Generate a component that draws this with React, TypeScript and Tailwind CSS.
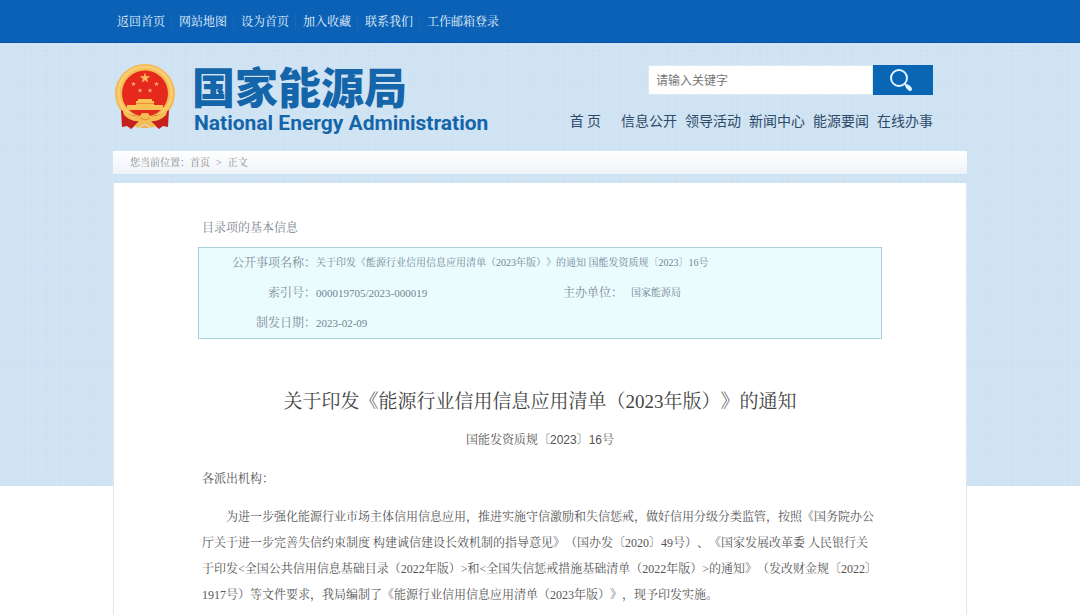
const utilityLinks = ['返回首页', '网站地图', '设为首页', '加入收藏', '联系我们', '工作邮箱登录'];

const mainLinks = ['信息公开', '领导活动', '新闻中心', '能源要闻', '在线办事'];

function Star({ x, y, r }: { x: number; y: number; r: number }) {
  const points = Array.from({ length: 10 }, (_, i) => {
    const radius = i % 2 === 0 ? r : r * 0.4;
    const angle = (Math.PI / 5) * i - Math.PI / 2;
    return `${(x + radius * Math.cos(angle)).toFixed(2)},${(y + radius * Math.sin(angle)).toFixed(2)}`;
  }).join(' ');
  return <polygon points={points} />;
}

function Emblem() {
  return (
    <svg viewBox="0 0 60 66" className="h-[66px] w-[60px] shrink-0" role="img" aria-label="国徽">
      <ellipse cx="30" cy="29.5" rx="30" ry="29.5" fill="#f5b952" />
      <ellipse cx="30" cy="29" rx="26.5" ry="26" fill="none" stroke="#f9cd72" strokeWidth="3" />
      <path d="M6 46 Q30 60 54 46 L53 63 L48 62 L44 65 L38 60 H22 L16 65 L12 62 L7 63 Z" fill="#c5201b" />
      <circle cx="30" cy="29.5" r="23" fill="#e52a1d" />
      <g fill="#f7b072">
        <Star x={18.5} y={20} r={2.6} />
        <Star x={41.5} y={20} r={2.6} />
        <Star x={25} y={26.5} r={2.6} />
        <Star x={35} y={26.5} r={2.6} />
      </g>
      <g fill="#f9bd5c">
        <Star x={30} y={14} r={5.5} />
      </g>
      <path d="M23 35 H37 V37 H39 V41 H48 V46 H12 V41 H21 V37 H23 Z" fill="#f9c256" />
      <path d="M21 39.500 H39" stroke="#ee8a3a" strokeWidth="1" />
      <path d="M7 44 Q17 54 25 52 L27 49 H33 L35 52 Q43 54 53 44 L51 51 Q44 58 36 57 L41 62 L37 64 L30 60 L23 64 L19 62 L24 57 Q16 58 9 51 Z" fill="#f7bd55" />
      <path d="M25 54 L30 56 L35 54" fill="none" stroke="#e08a32" strokeWidth="1" />
      <path d="M25 64 L30 61 L35 64 Z" fill="#f2b04a" />
    </svg>
  );
}

function SearchIcon() {
  return (
    <svg viewBox="0 0 24 24" className="mr-1 size-6" fill="none" stroke="#dff5ff" strokeLinecap="round" aria-hidden="true">
      <circle cx="10" cy="10" r="8" strokeWidth="2" />
      <path d="M16 16 L18 18" strokeWidth="2" />
      <path d="M18.500 18.500 L21 21" strokeWidth="4" />
    </svg>
  );
}

function Backdrop() {
  return (
    <div className="absolute inset-x-0 top-0 -z-10 h-[486px] bg-[#cfe3f3]" aria-hidden="true">
      <div className="h-full bg-[repeating-linear-gradient(90deg,#ffffff12_0_1px,transparent_1px_7px),repeating-linear-gradient(0deg,#ffffff12_0_1px,transparent_1px_9px),repeating-linear-gradient(90deg,#b4d3ea12_0_2px,transparent_2px_23px),repeating-linear-gradient(0deg,#b4d3ea12_0_2px,transparent_2px_31px)]" />
    </div>
  );
}

function Header() {
  return (
    <header>
      <nav className="bg-[#0b61b5] shadow-[inset_0_-1px_0_#0a559f]" aria-label="快捷链接">
        <ul className="mx-auto flex h-[43px] w-full max-w-[854px] items-center gap-[7px] pl-1 text-xs text-[#e6f3ff]">
          {utilityLinks.map((label) => (
            <li key={label} className="border-r border-white/5 pr-[6px] leading-4 last:border-0">
              <a href="#">{label}</a>
            </li>
          ))}
        </ul>
      </nav>
      <div className="mx-auto flex h-[108px] w-full max-w-[854px] items-start justify-between pr-[34px] pl-[2px]">
        <a href="#" className="flex pt-[21px] text-[#1465aa]">
          <Emblem />
          <span className="ml-[17px] flex flex-col pt-[3px] font-['Roboto','Noto_Sans_CJK_SC',sans-serif] font-bold">
            <span className="text-[43px] leading-[44px] font-black">国家能源局</span>
            <span className="pl-[2px] text-[21px] leading-6">National Energy Administration</span>
          </span>
        </a>
        <div className="flex flex-col items-end pt-[22px] font-['Noto_Sans_CJK_SC',sans-serif]">
          <form className="flex h-[30px]" role="search" onSubmit={(event) => event.preventDefault()}>
            <input
              type="search"
              aria-label="搜索关键字"
              placeholder="请输入关键字"
              className="w-[225px] border border-[#dde8f0] bg-white px-[7px] text-xs text-gray-700 outline-none placeholder:text-[#777]"
            />
            <button type="submit" aria-label="搜索" className="flex w-[60px] items-center justify-center bg-[#0966b4]">
              <SearchIcon />
            </button>
          </form>
          <nav className="mt-[15px] flex gap-2 text-sm leading-5 text-[#2f4a68]" aria-label="主导航">
            <a href="#" className="mr-3">
              首 页
            </a>
            {mainLinks.map((label) => (
              <a key={label} href="#">
                {label}
              </a>
            ))}
          </nav>
        </div>
      </div>
    </header>
  );
}

function InfoTable() {
  return (
    <div className="mt-[9px] border border-[#a9d0dc] bg-[#ebfcfe]">
      <table className="w-full table-fixed text-[10px] text-[#6f8494]">
        <colgroup>
          <col className="w-[117px]" />
          <col />
          <col className="w-[60px]" />
          <col className="w-[258px]" />
        </colgroup>
        <tbody>
          <tr className="h-[30px]">
            <th className="text-right text-xs font-normal text-[#7d8a94]">公开事项名称：</th>
            <td colSpan={3}>关于印发《能源行业信用信息应用清单（2023年版）》的通知 国能发资质规〔2023〕16号</td>
          </tr>
          <tr className="h-[30px]">
            <th className="text-right text-xs font-normal text-[#7d8a94]">索引号：</th>
            <td className="text-[11px]">000019705/2023-000019</td>
            <th className="text-right text-xs font-normal whitespace-nowrap text-[#7d8a94]">主办单位：</th>
            <td className="pl-2">国家能源局</td>
          </tr>
          <tr className="h-[30px]">
            <th className="text-right text-xs font-normal text-[#7d8a94]">制发日期：</th>
            <td colSpan={3} className="text-[11px]">
              2023-02-09
            </td>
          </tr>
        </tbody>
      </table>
    </div>
  );
}

export default function App() {
  return (
    <div className="relative isolate flex min-h-screen flex-col bg-white font-['Liberation_Serif','Noto_Serif_CJK_SC','Noto_Sans_CJK_SC',serif] [text-spacing-trim:space-all]">
      <Backdrop />
      <Header />
      <nav
        className="mx-auto flex h-[23px] w-full max-w-[854px] shrink-0 items-center bg-linear-to-b from-white to-[#eef2f8] pl-[17px] text-[10px] text-[#888]"
        aria-label="面包屑"
      >
        <span>您当前位置：</span>
        <a href="#">首页</a>
        <span className="px-[6px]">&gt;</span>
        <span>正文</span>
      </nav>
      <main className="mx-auto mt-[9px] w-full max-w-[854px] grow border-x border-[#e2e6ea] bg-white px-[84px] pt-[35px] text-xs text-[#555]">
        <h2 className="px-1 leading-5 text-[#7b838b]">目录项的基本信息</h2>
        <InfoTable />
        <article>
          <h1 className="mt-[49px] text-center text-[19px] leading-7 text-[#444]">
            关于印发《能源行业信用信息应用清单（2023年版）》的通知
          </h1>
          <p className="mt-3 text-center font-['Liberation_Sans','Noto_Serif_CJK_SC','Noto_Sans_CJK_SC',sans-serif] leading-6">
            国能发资质规〔2023〕16号
          </p>
          <div className="mt-[14px] px-1 leading-[26px]">
            <p>各派出机构：</p>
            <p className="mt-3 indent-6">
              为进一步强化能源行业市场主体信用信息应用，推进实施守信激励和失信惩戒，做好信用分级分类监管，按照《国务院办公厅关于进一步完善失信约束制度
              构建诚信建设长效机制的指导意见》（国办发〔2020〕49号）、《国家发展改革委
              人民银行关于印发&lt;全国公共信用信息基础目录（2022年版）&gt;和&lt;全国失信惩戒措施基础清单（2022年版）&gt;的通知》（发改财金规〔2022〕1917号）等文件要求，我局编制了《能源行业信用信息应用清单（2023年版）》，现予印发实施。
            </p>
          </div>
        </article>
      </main>
    </div>
  );
}
